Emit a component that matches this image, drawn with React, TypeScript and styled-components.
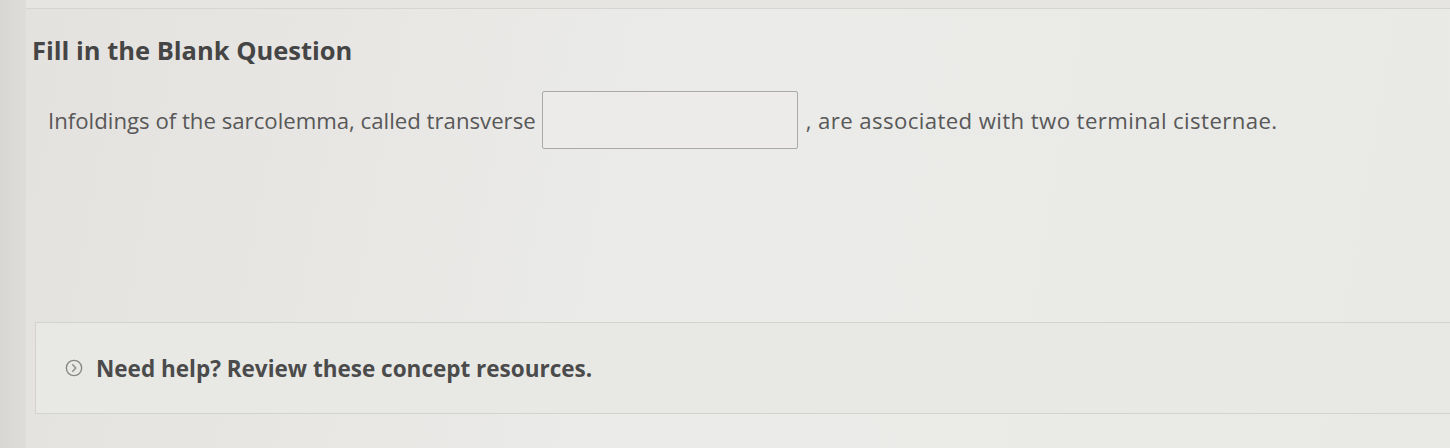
import React from 'react';
import styled, {createGlobalStyle} from 'styled-components';

const GlobalStyle = createGlobalStyle`
  html, body {
    margin: 0;
    padding: 0;
    background: #e6e5e2;
  }
  body {
    font-family: "Open Sans", "Liberation Sans", sans-serif;
    color: #4a4a4a;
  }
`;

const Page = styled.div`
  width: 1450px;
  height: 448px;
  display: flex;
  overflow: hidden;
`;

const Gutter = styled.div`
  width: 26px;
  flex-shrink: 0;
  background: linear-gradient(90deg, #d9d7d3 0%, #dfddda 100%);
`;

const Main = styled.div`
  flex: 1;
  display: flex;
  flex-direction: column;
  background: linear-gradient(100deg, #e4e2df 0%, #ebebe9 45%, #e9e9e6 100%);
  border-top: 1px solid #d6d5d2;
  margin-top: 8px;
`;

const Title = styled.h2`
  margin: 24px 0 0 6px;
  font-size: 25.5px;
  line-height: 34px;
  font-weight: 700;
  color: #454545;
`;

const QuestionRow = styled.div`
  display: flex;
  align-items: center;
  margin: 24px 0 0 22px;
  font-size: 22.2px;
  color: #585858;
`;

const BlankInput = styled.input`
  width: 256px;
  height: 58px;
  box-sizing: border-box;
  margin: 0 8px 0 6px;
  border: 1.5px solid #a9a9a7;
  border-radius: 2px;
  background: #ecebe9;
  font: inherit;
`;

const Trailing = styled.span`
  letter-spacing: 0.4px;
`;

const Spacer = styled.div`
  flex: 1;
`;

const HelpPanel = styled.div`
  margin: 0 0 34px 9px;
  height: 90px;
  border: 1.5px solid #d3d2cf;
  border-right: none;
  background: #e8e8e5;
  display: flex;
  align-items: center;
  padding-left: 29px;
  gap: 13px;
`;

const Chevron = styled.span`
  width: 18px;
  height: 18px;
  display: inline-flex;
  color: #8a8a88;
`;

const HelpText = styled.span`
  font-size: 22.5px;
  font-weight: 700;
  color: #4b4b4b;
`;

export default function App() {
  return (
    <>
      <GlobalStyle />
      <Page>
        <Gutter />
        <Main>
          <Title>Fill in the Blank Question</Title>
          <QuestionRow>
            <span>Infoldings of the sarcolemma, called transverse</span>
            <BlankInput aria-label="blank" />
            <Trailing>, are associated with two terminal cisternae.</Trailing>
          </QuestionRow>
          <Spacer />
          <HelpPanel>
            <Chevron>
              <svg viewBox="0 0 20 20" width="18" height="18" fill="none" stroke="currentColor" strokeWidth="1.6">
                <circle cx="10" cy="10" r="8.5" />
                <path d="M8.6 6.4 L12 10 L8.6 13.6" strokeLinecap="round" strokeLinejoin="round" />
              </svg>
            </Chevron>
            <HelpText>Need help? Review these concept resources.</HelpText>
          </HelpPanel>
        </Main>
      </Page>
    </>
  );
}
